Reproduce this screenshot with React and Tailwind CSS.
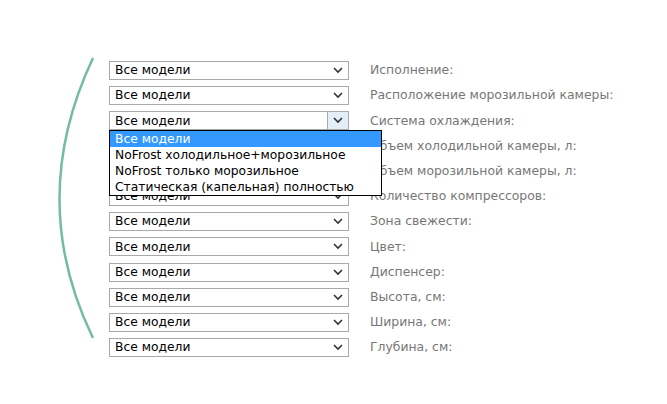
const labels = [
  'Исполнение:',
  'Расположение морозильной камеры:',
  'Система охлаждения:',
  'Объем холодильной камеры, л:',
  'Объем морозильной камеры, л:',
  'Количество компрессоров:',
  'Зона свежести:',
  'Цвет:',
  'Диспенсер:',
  'Высота, см:',
  'Ширина, см:',
  'Глубина, см:',
];

const options = [
  'Все модели',
  'NoFrost холодильное+морозильное',
  'NoFrost только морозильное',
  'Статическая (капельная) полностью',
];

function Chevron() {
  return (
    <svg width="10" height="7" viewBox="0 0 10 7">
      <path d="M1 1l4 4 4-4" fill="none" stroke="#333" strokeWidth="1.6" />
    </svg>
  );
}

export default function App() {
  return (
    <div className="relative w-[667px] h-[404px] bg-white overflow-hidden" style={{ fontFamily: '"DejaVu Sans", Verdana, sans-serif' }}>
      <svg className="absolute left-0 top-0" width="120" height="404">
        <path d="M93 58 Q 26 200 93 338" fill="none" stroke="#74bba4" strokeWidth="2.5" />
      </svg>
      <div className="absolute left-[109px] top-[61px] flex flex-col gap-[6.2px]">
        {labels.map((l, i) => (
          <div key={l} className="flex items-center h-[19px]">
            <div className="relative w-[240px] h-[19px] border border-[#a9a9a9] bg-white flex items-center pl-[5px] text-[12.3px] text-black">
              Все модели
              <div className={`absolute right-0 top-0 h-[17px] w-[21px] flex items-center justify-center ${i === 2 ? 'bg-[#e3eef8] border-l border-[#a9a9a9]' : ''}`}>
                <Chevron />
              </div>
            </div>
            <span className="ml-[21px] text-[12.4px] text-[#777]">{l}</span>
          </div>
        ))}
      </div>
      <div className="absolute left-[109px] top-[130px] w-[273px] border border-black bg-white text-[12.3px] text-black">
        {options.map((o, i) => (
          <div key={o} className={`h-[16px] leading-[16px] pl-[5px] ${i === 0 ? 'bg-[#3399ff] text-white' : ''}`}>{o}</div>
        ))}
      </div>
    </div>
  );
}
